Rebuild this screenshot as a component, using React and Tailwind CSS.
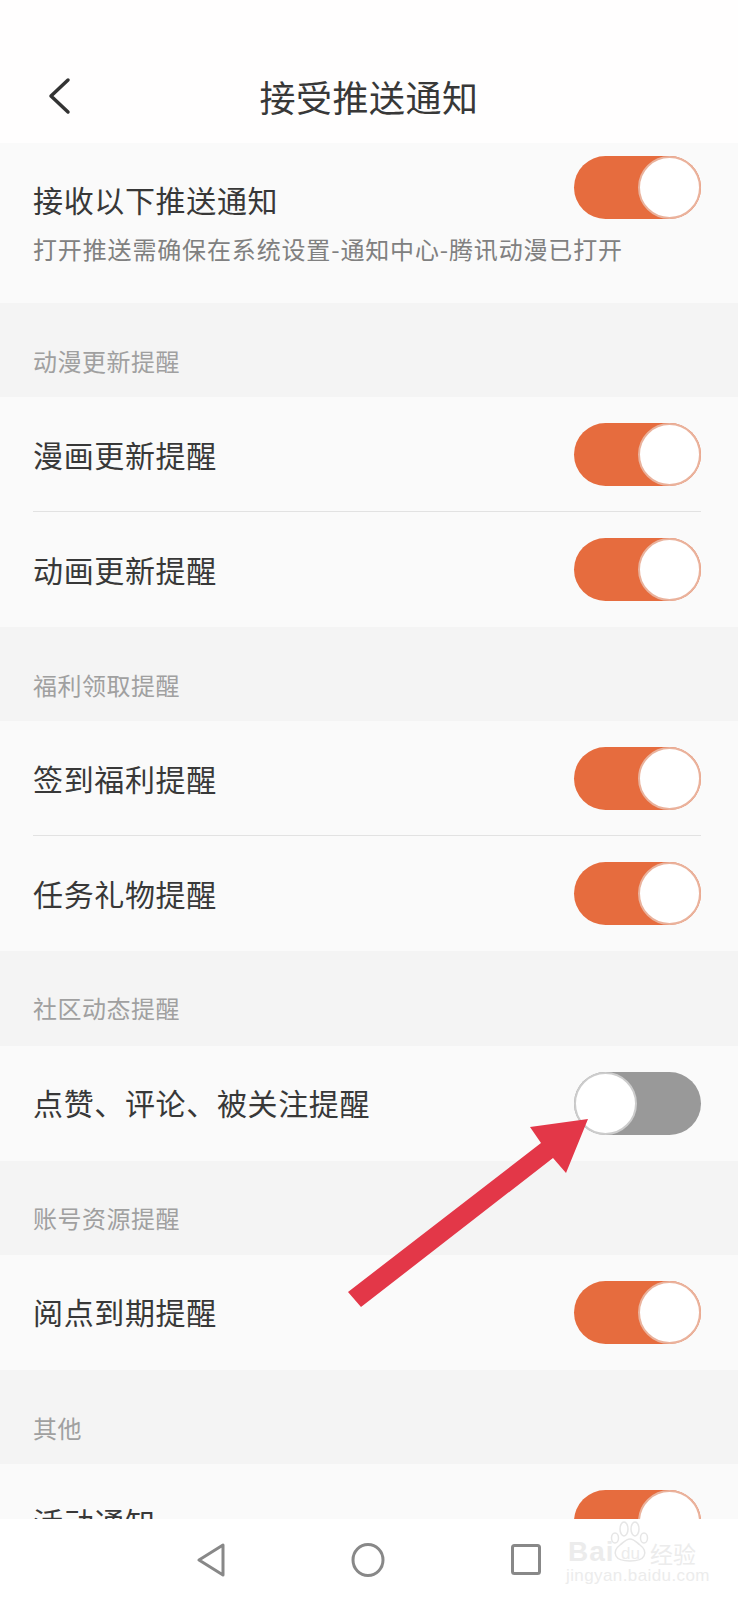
function Toggle({ on = true }) {
  return (
    <div className={`flex w-[127px] h-[63px] shrink-0 rounded-full ${on ? 'justify-end bg-[#e66c3e]' : 'justify-start bg-[#999999]'}`}>
      <div className={`w-[63px] h-[63px] rounded-full bg-white border-2 ${on ? 'border-[#eab29c]' : 'border-[#cccccc]'}`} />
    </div>
  )
}

function Row({ label, on = true, className = 'h-[115px]', textClass = 'mb-[1px]' }) {
  return (
    <div className={`flex items-center justify-between pl-[33px] pr-[37px] bg-[#fafafa] ${className}`}>
      <span className={`text-[30px] leading-[40px] tracking-[0.65px] text-[#383838] ${textClass}`}>{label}</span>
      <Toggle on={on} />
    </div>
  )
}

function Divider() {
  return (
    <div className="bg-[#fafafa] pl-[33px] pr-[37px]">
      <div className="h-px bg-[#e2e2e2]" />
    </div>
  )
}

function SectionLabel({ children, className = 'h-[94px] pb-[21px]' }) {
  return (
    <div className={`flex items-end pl-[33px] bg-[#f4f4f4] ${className}`}>
      <span className="text-[24px] leading-[30px] tracking-[0.5px] text-[#a0a0a0]">{children}</span>
    </div>
  )
}

function Arrow() {
  return (
    <svg className="absolute left-[340px] top-[1110px]" width="260" height="205" viewBox="340 1110 260 205">
      <polygon fill="#e33748" points="588,1119 530,1127 541,1143 348,1292 361,1307 553,1158 566,1173" />
    </svg>
  )
}

function Watermark() {
  return (
    <div className="absolute left-[566px] top-0 w-[134px] h-[68px] select-none font-['Liberation_Sans',sans-serif] text-[#ececec]">
      <svg className="absolute left-[44px] top-[2px]" width="40" height="42" viewBox="0 0 40 42" fill="none" stroke="#e6e6e6" strokeWidth="1.5">
        <ellipse cx="5" cy="17" rx="3.5" ry="5" />
        <ellipse cx="14" cy="8" rx="4" ry="7" />
        <ellipse cx="25" cy="8" rx="4" ry="7" />
        <ellipse cx="34" cy="17" rx="3.5" ry="5" />
        <path d="M20 18c-4 0-6 3-10 6-4 3-6 7-4 11 2 4 6 5 14 5s12-1 14-5c2-4 0-8-4-11-4-3-6-6-10-6z" />
      </svg>
      <span className="absolute left-[2px] top-[20px] text-[28px] leading-[26px] font-bold tracking-[1px] whitespace-nowrap">Bai</span>
      <span className="absolute left-[55px] top-[26px] text-[17px] leading-[18px] whitespace-nowrap">du</span>
      <span className="absolute left-[84px] top-[22px] text-[23px] leading-[24px] font-['Noto_Sans_CJK_SC',sans-serif] whitespace-nowrap">经验</span>
      <span className="absolute left-0 top-[47px] text-[17px] leading-[20px] tracking-[0.4px] whitespace-nowrap">jingyan.baidu.com</span>
    </div>
  )
}

function NavBar() {
  return (
    <div className="relative flex items-start justify-between h-[81px] shrink-0 pt-[24px] pl-[197px] pr-[197px] bg-white">
      <svg width="28" height="34" viewBox="0 0 28 34" fill="none" stroke="#888888" strokeWidth="3" strokeLinejoin="round">
        <path d="M26 2v30L2 17z" />
      </svg>
      <svg width="34" height="34" viewBox="0 0 34 34" fill="none" stroke="#888888" strokeWidth="3">
        <ellipse cx="17" cy="17" rx="15" ry="15.5" />
      </svg>
      <svg width="30" height="31" viewBox="0 0 30 31" fill="none" stroke="#888888" strokeWidth="3" className="mt-[1px]">
        <rect x="1.5" y="1.5" width="27" height="28" rx="2" />
      </svg>
      <Watermark />
    </div>
  )
}

export default function App() {
  return (
    <div className="relative flex flex-col w-[738px] h-[1600px] overflow-hidden bg-[#fffefe] font-['Noto_Sans_CJK_SC','Noto_Sans',sans-serif]">
      {/* Header */}
      <div className="relative flex items-center justify-center h-[143px] shrink-0 pt-[50px] pb-[1px]">
        <svg className="absolute left-[47px] top-[77px]" width="24" height="38" viewBox="0 0 24 38" fill="none" stroke="#333333" strokeWidth="3.5" strokeLinecap="round" strokeLinejoin="round">
          <path d="M21 3 4 19l17 16" />
        </svg>
        <h1 className="text-[36px] leading-[48px] tracking-[0.5px] font-normal text-[#383838]">接受推送通知</h1>
      </div>

      <div className="flex-1 overflow-hidden">
        {/* Master switch */}
        <div className="flex justify-between h-[160px] pl-[33px] pr-[37px] bg-[#fafafa]">
          <div className="min-w-0 flex-1 pt-[36px]">
            <div className="text-[30px] leading-[40px] tracking-[0.65px] text-[#383838]">接收以下推送通知</div>
            <div className="mt-[15px] text-[24px] leading-[30px] tracking-[0.85px] text-[#808080] whitespace-nowrap">打开推送需确保在系统设置-通知中心-腾讯动漫已打开</div>
          </div>
          <div className="pt-[13px]">
            <Toggle />
          </div>
        </div>

        <SectionLabel>动漫更新提醒</SectionLabel>
        <Row label="漫画更新提醒" className="h-[114px]" />
        <Divider />
        <Row label="动画更新提醒" />

        <SectionLabel>福利领取提醒</SectionLabel>
        <Row label="签到福利提醒" className="h-[114px]" />
        <Divider />
        <Row label="任务礼物提醒" />

        <SectionLabel className="h-[95px] pb-[23px]">社区动态提醒</SectionLabel>
        <Row label="点赞、评论、被关注提醒" on={false} textClass="mb-[3px]" />

        <SectionLabel className="h-[94px] pb-[22px]">账号资源提醒</SectionLabel>
        <Row label="阅点到期提醒" textClass="mb-[3px]" />

        <SectionLabel>其他</SectionLabel>
        <Row label="活动通知" />
      </div>

      <NavBar />
      <Arrow />
    </div>
  )
}
